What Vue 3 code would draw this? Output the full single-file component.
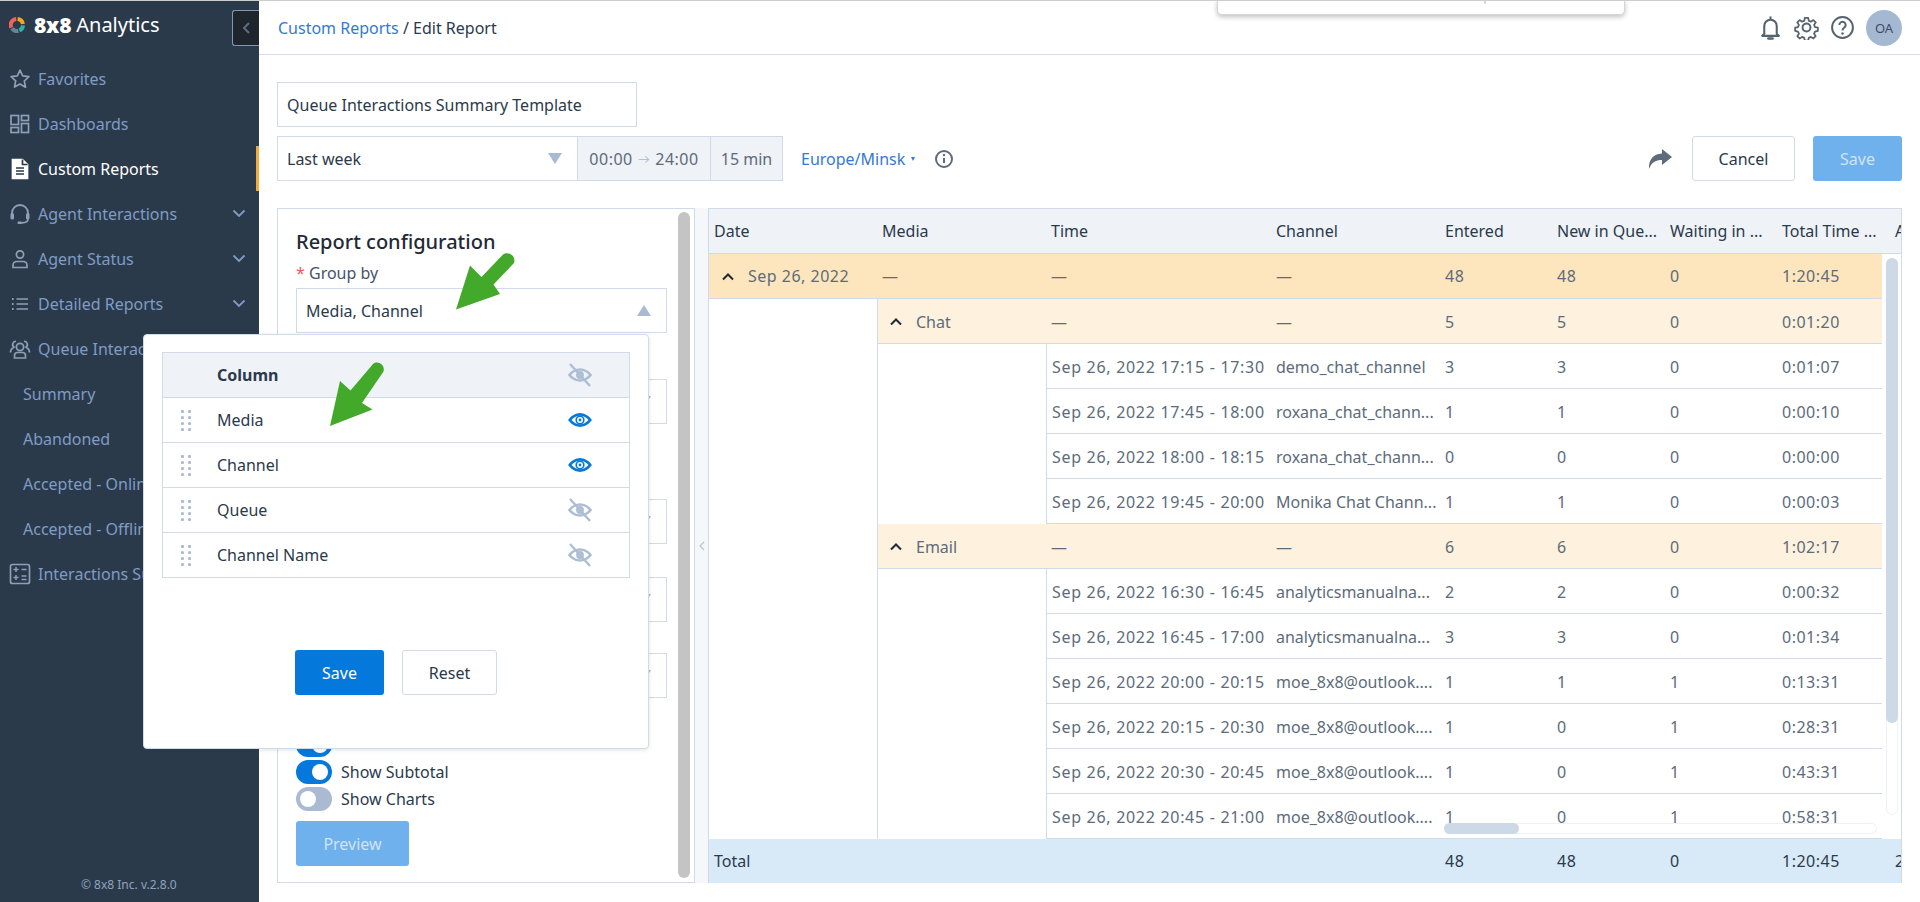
<script setup>
const nav = [
  { label: 'Favorites', icon: 'star' },
  { label: 'Dashboards', icon: 'dash' },
  { label: 'Custom Reports', icon: 'doc', active: true },
  { label: 'Agent Interactions', icon: 'head', chev: true },
  { label: 'Agent Status', icon: 'user', chev: true },
  { label: 'Detailed Reports', icon: 'list', chev: true },
  { label: 'Queue Interactions', icon: 'group', chev: true },
  { label: 'Summary', sub: true },
  { label: 'Abandoned', sub: true },
  { label: 'Accepted - Online', sub: true },
  { label: 'Accepted - Offline', sub: true },
  { label: 'Interactions Summary', icon: 'calc' },
]
const cols = ['Date', 'Media', 'Time', 'Channel', 'Entered', 'New in Que...', 'Waiting in ...', 'Total Time ...', 'A']
const d = 'Sep 26, 2022 '
const rows = [
  { lvl: 0, date: 'Sep 26, 2022', media: '—', time: '—', ch: '—', v: ['48', '48', '0', '1:20:45'] },
  { lvl: 1, media: 'Chat', time: '—', ch: '—', v: ['5', '5', '0', '0:01:20'] },
  { lvl: 2, time: d + '17:15 - 17:30', ch: 'demo_chat_channel', v: ['3', '3', '0', '0:01:07'] },
  { lvl: 2, time: d + '17:45 - 18:00', ch: 'roxana_chat_chann...', v: ['1', '1', '0', '0:00:10'] },
  { lvl: 2, time: d + '18:00 - 18:15', ch: 'roxana_chat_chann...', v: ['0', '0', '0', '0:00:00'] },
  { lvl: 2, time: d + '19:45 - 20:00', ch: 'Monika Chat Chann...', v: ['1', '1', '0', '0:00:03'] },
  { lvl: 1, media: 'Email', time: '—', ch: '—', v: ['6', '6', '0', '1:02:17'] },
  { lvl: 2, time: d + '16:30 - 16:45', ch: 'analyticsmanualna...', v: ['2', '2', '0', '0:00:32'] },
  { lvl: 2, time: d + '16:45 - 17:00', ch: 'analyticsmanualna...', v: ['3', '3', '0', '0:01:34'] },
  { lvl: 2, time: d + '20:00 - 20:15', ch: 'moe_8x8@outlook....', v: ['1', '1', '1', '0:13:31'] },
  { lvl: 2, time: d + '20:15 - 20:30', ch: 'moe_8x8@outlook....', v: ['1', '0', '1', '0:28:31'] },
  { lvl: 2, time: d + '20:30 - 20:45', ch: 'moe_8x8@outlook....', v: ['1', '0', '1', '0:43:31'] },
  { lvl: 2, time: d + '20:45 - 21:00', ch: 'moe_8x8@outlook....', v: ['1', '0', '1', '0:58:31'] },
]
const popupRows = [
  { name: 'Media', on: true },
  { name: 'Channel', on: true },
  { name: 'Queue', on: false },
  { name: 'Channel Name', on: false },
]
const dots = [[1.5, 1.5], [8.5, 1.5], [1.5, 7.5], [8.5, 7.5], [1.5, 13.5], [8.5, 13.5], [1.5, 19.5], [8.5, 19.5]]
</script>

<template>
  <div class="page">
    <aside class="side">
      <div class="brand">
        <svg class="logo" viewBox="0 0 16 16" width="16" height="16" fill="none" stroke-width="4">
          <path d="M2.3 10.6A6 6 0 0 1 7.2 2.05" stroke="#f0625d" />
          <path d="M8.6 2.03A6 6 0 0 1 13.9 7" stroke="#f5a81c" />
          <path d="M14 8.4A6 6 0 0 1 10.4 13.5" stroke="#2fb3a3" />
          <path d="M9.4 13.85A6 6 0 0 1 3 11.4" stroke="#6b8494" />
        </svg>
        <b class="b8">8x8</b><span class="bname">Analytics</span>
      </div>
      <button class="collapse">
        <svg viewBox="0 0 10 14" width="10" height="14" fill="none" stroke="#5d6d80" stroke-width="2"><path d="M8 2 3 7l5 5" /></svg>
      </button>
      <nav class="nav">
        <div v-for="n in nav" :key="n.label" class="item" :class="{ active: n.active, sub: n.sub }">
          <svg v-if="n.icon" class="ico" viewBox="0 0 22 22" width="22" height="22" fill="none" stroke="currentColor" stroke-width="1.7">
            <path v-if="n.icon === 'star'" d="M11 2.2l2.7 5.7 6.2.8-4.6 4.3 1.2 6.2L11 16l-5.500 3 1.200-6.200L2.100 8.700l6.200-.8z" stroke-linejoin="round" />
            <g v-if="n.icon === 'dash'"><rect x="2" y="2.500" width="7.500" height="9" /><rect x="12.500" y="2.500" width="7" height="5" /><rect x="2" y="14.500" width="7.500" height="5" /><rect x="12.500" y="10.500" width="7" height="9" /></g>
            <g v-if="n.icon === 'doc'"><path d="M3.500 1.500h10l5 5v14h-15z" fill="#fff" stroke="#fff" /><path d="M13.500 1.500v5h5" stroke="#2b3a4b" /><path d="M7 10h8M7 13h8M7 16h8" stroke="#2b3a4b" /></g>
            <g v-if="n.icon === 'head'"><path d="M3 12V10a8 8 0 0 1 16 0v2" stroke-width="1.800" /><rect x="1.500" y="10" width="3.500" height="6.500" rx="1.500" fill="currentColor" stroke="none" /><rect x="17" y="10" width="3.500" height="6.500" rx="1.500" fill="currentColor" stroke="none" /><path d="M19 16c0 3-3 3.800-6 3.800" /><rect x="8.500" y="18.500" width="4.500" height="2.500" rx="1" fill="currentColor" stroke="none" /></g>
            <g v-if="n.icon === 'user'"><circle cx="11" cy="6.500" r="3.600" /><path d="M4 19.500v-2.500c0-2 1.800-3.500 4-3.500h6c2.200 0 4 1.500 4 3.500v2.500z" /></g>
            <g v-if="n.icon === 'list'"><path d="M7.500 6h11.500M7.500 11h11.500M7.500 16h11.500" /><path d="M3 6h1.600M3 11h1.600M3 16h1.600" stroke-width="1.800" /></g>
            <g v-if="n.icon === 'group'"><circle cx="11" cy="9" r="3.600" /><path d="M5.500 20v-2.500c0-2 1.500-3 3-3h5c1.500 0 3 1 3 3V20z" /><path d="M7 3.500a3 3 0 0 0-2 5.500c-1.800 1-3.500 3-3.500 5.500M15 3.500a3 3 0 0 1 2 5.500c1.800 1 3.500 3 3.500 5.500" /></g>
            <g v-if="n.icon === 'calc'"><rect x="1.500" y="1.500" width="19" height="19" rx="2" /><path d="M4.500 6.500h5M7 4v5M12.500 6.500h5M12.500 13h5M12.500 16.500h5M4.500 14.500h5M7 12v5" stroke-width="1.400" /></g>
          </svg>
          <span class="lbl">{{ n.label }}</span>
          <svg v-if="n.chev" class="chev" viewBox="0 0 14 9" width="14" height="9" fill="none" stroke="currentColor" stroke-width="1.800"><path d="M1.500 1.500 7 7l5.500-5.500" /></svg>
        </div>
      </nav>
      <div class="copy">© 8x8 Inc. v.2.8.0</div>
    </aside>

    <main class="main">
      <header class="head">
        <div class="crumb"><a>Custom Reports</a> / Edit Report</div>
        <div class="tools">
          <svg viewBox="0 0 24 24" width="25" height="25" fill="none" stroke="#55636f" stroke-width="2"><path d="M12 1.500v2.500M6 18V10.500a6 6 0 0 1 12 0V18l2 2H4z" stroke-linejoin="round" /><path d="M10 22.500h4" stroke-width="2.400" stroke-linecap="round" /></svg>
          <svg viewBox="0 0 24 24" width="25" height="25" fill="none" stroke="#55636f" stroke-width="1.900"><circle cx="12" cy="12" r="3.800" /><path stroke-linejoin="round" d="M10.200 1.800h3.600l.6 3 2.300 1 2.600-1.700 2.500 2.500-1.700 2.600 1 2.300 3 .6v3.600l-3 .6-1 2.300 1.700 2.600-2.500 2.500-2.600-1.700-2.300 1-.6 3h-3.600l-.6-3-2.300-1-2.600 1.700-2.500-2.500 1.700-2.600-1-2.300-3-.6v-3.600l3-.6 1-2.300-1.700-2.600 2.500-2.500 2.600 1.700 2.300-1z" transform="translate(1.200 1.200) scale(.9)" /></svg>
          <svg viewBox="0 0 24 24" width="25" height="25" fill="none" stroke="#55636f" stroke-width="1.900"><circle cx="12" cy="12" r="10" /><path d="M9 9.500a3 3 0 1 1 4.700 2.500c-1.100.8-1.700 1.400-1.700 2.800" /><circle cx="12" cy="17.800" r="1.200" fill="#55636f" stroke="none" /></svg>
          <span class="avatar">OA</span>
        </div>
      </header>

      <section class="content">
        <div class="title-input">Queue Interactions Summary Template</div>
        <div class="filters">
          <div class="range">
            <span>Last week</span>
            <i class="tri down"></i>
          </div>
          <div class="addon time">00:00 <em>→</em> 24:00</div>
          <div class="addon min">15 min</div>
          <a class="tz">Europe/Minsk <i class="mini"></i></a>
          <svg class="info" viewBox="0 0 20 20" width="20" height="20" fill="none" stroke="#5d6b7a" stroke-width="2"><circle cx="10" cy="10" r="8" /><path d="M10 9v5" /><circle cx="10" cy="6" r="1.200" fill="#5d6b7a" stroke="none" /></svg>
          <div class="spacer"></div>
          <svg class="share" viewBox="0 0 24 20" width="24" height="20"><path fill="#5d6b7a" d="M14 0l10 8-10 8v-5C7.500 11 3.500 13.500 1 20 .5 11 5 5 14 4.500z" /></svg>
          <button class="btn ghost cancel">Cancel</button>
          <button class="btn pale top-save">Save</button>
        </div>

        <div class="work">
          <div class="config">
            <h2>Report configuration</h2>
            <label class="lab"><span class="req">*</span> Group by</label>
            <div class="sel"><span>Media, Channel</span><i class="tri up"></i></div>
            <div class="hiddenlab"></div>
            <div class="sel"><i class="tri down"></i></div>
            <div class="hiddenlab big"></div>
            <div class="sel"><i class="tri down"></i></div>
            <div class="sel mt"><i class="tri down"></i></div>
            <div class="sel mtb"><i class="tri down"></i></div>
            <div class="tog-row first"><i class="tog on"></i><span>Show Total</span></div>
            <div class="tog-row"><i class="tog on"></i><span>Show Subtotal</span></div>
            <div class="tog-row"><i class="tog"></i><span>Show Charts</span></div>
            <button class="btn pale preview">Preview</button>
            <div class="panelbar"></div>
          </div>
          <div class="split"><svg viewBox="0 0 6 10" width="6" height="10" fill="none" stroke="#b9c6d8" stroke-width="1.200"><path d="M5 1 1 5l4 4" /></svg></div>
          <div class="grid">
            <div class="r hdr">
              <div v-for="c in cols" :key="c" class="c">{{ c }}</div>
            </div>
            <div class="body">
              <div class="rows">
                <div v-for="(r, i) in rows" :key="i" class="r" :class="'l' + r.lvl">
                  <div class="c cd">
                    <template v-if="r.lvl === 0"><svg class="upc" viewBox="0 0 14 9" width="14" height="9" fill="none" stroke="#1f2a36" stroke-width="2"><path d="M2 7.500 7 2.500l5 5" /></svg>{{ r.date }}</template>
                  </div>
                  <div class="c cm">
                    <svg v-if="r.lvl === 1" class="upc" viewBox="0 0 14 9" width="14" height="9" fill="none" stroke="#1f2a36" stroke-width="2"><path d="M2 7.500 7 2.500l5 5" /></svg>{{ r.media }}
                  </div>
                  <div class="c ct">{{ r.time }}</div>
                  <div class="c">{{ r.ch }}</div>
                  <div v-for="(v, j) in r.v" :key="j" class="c num">{{ v }}</div>
                </div>
              </div>
              <div class="vtrack"><div class="vthumb"></div></div>
              <div class="htrack"><div class="hthumb"></div></div>
            </div>
            <div class="r foot">
              <div class="c wide">Total</div>
              <div class="c num">48</div><div class="c num">48</div><div class="c num">0</div><div class="c num">1:20:45</div><div class="c">2</div>
            </div>
          </div>
        </div>
      </section>
    </main>

    <div class="popup">
      <div class="ptable">
        <div class="prow phead">
          <span class="grip-slot"></span>
          <span class="pname">Column</span>
          <svg class="eye" viewBox="0 0 24 24" width="24" height="24" fill="none" stroke="#adbdd3" stroke-width="2.600"><path d="M1.500 12S5.500 6.500 12 6.500 22.500 12 22.500 12 18.500 17.500 12 17.500 1.500 12 1.500 12z" /><circle cx="12" cy="12" r="2.600" /><path d="M2 1l20 22" stroke-width="2.400" /></svg>
        </div>
        <div v-for="p in popupRows" :key="p.name" class="prow">
          <svg class="grip-slot grip" viewBox="0 0 10 21" width="10" height="21"><circle v-for="(q, k) in dots" :key="k" :cx="q[0]" :cy="q[1]" r="1.600" fill="#a9bad2" /></svg>
          <span class="pname">{{ p.name }}</span>
          <svg v-if="p.on" class="eye" viewBox="0 0 24 24" width="24" height="24" fill="none" stroke="#0578dc"><path stroke-width="2.800" d="M1.800 12S6 6.400 12 6.400 22.200 12 22.200 12 18 17.600 12 17.600 1.800 12 1.800 12z" /><circle cx="12" cy="12" r="3.800" stroke-width="1.600" /><circle cx="12" cy="12" r="1.400" fill="#0578dc" stroke="none" /></svg>
          <svg v-else class="eye" viewBox="0 0 24 24" width="24" height="24" fill="none" stroke="#adbdd3" stroke-width="2.600"><path d="M1.500 12S5.500 6.500 12 6.500 22.500 12 22.500 12 18.500 17.500 12 17.500 1.500 12 1.500 12z" /><circle cx="12" cy="12" r="2.600" /><path d="M2 1l20 22" stroke-width="2.400" /></svg>
        </div>
      </div>
      <div class="pbtns">
        <button class="btn solid">Save</button>
        <button class="btn ghost reset">Reset</button>
      </div>
    </div>

    <div class="toast"><i></i></div>

    <svg class="arrow a1" viewBox="0 0 70 72" width="70" height="72"><path fill="#43a92b" d="M0 60.500 14 16.500 25.500 28 47 5.500c5-4 13.500 1.500 11 8.500L37.500 35.500 44 45z" /></svg>
    <svg class="arrow a2" viewBox="0 0 70 72" width="70" height="72"><path fill="#43a92b" d="M0 64 10 19 20.500 28.500 43 2c5-4 12.500 1 10.500 7.500L32 41l10.500 6.500z" /></svg>
  </div>
</template>

<style>
html, body { margin: 0; padding: 0; background: #fff; }
</style>

<style scoped>
.page { position: relative; display: flex; width: 1920px; height: 902px; overflow: hidden; border-top: 1px solid #cdcdcd; box-sizing: border-box; font-family: "Noto Sans", Lato, sans-serif; font-size: 16px; color: #2b3a4b; background: #fff; }
.side { position: relative; width: 259px; flex: none; background: #2b3a4b; display: flex; flex-direction: column; color: #7f9cc4; }
.brand { height: 47px; padding: 0 0 0 9px; display: flex; align-items: center; color: #fff; }
.logo { margin-right: 9px; }
.b8 { font-family: "Open Sans", sans-serif; font-weight: 800; font-size: 21px; margin-right: 5px; letter-spacing: -.2px; }
.bname { font-size: 20px; }
.collapse { position: absolute; top: 9px; right: 0; width: 27px; height: 36px; box-sizing: border-box; border: 1px solid #8497b0; border-right: 0; border-radius: 3px 0 0 3px; background: #1e252d; display: flex; align-items: center; justify-content: center; padding: 0; }
.nav { padding-top: 8px; display: flex; flex-direction: column; }
.item { position: relative; height: 45px; display: flex; align-items: center; padding-left: 9px; box-sizing: border-box; white-space: nowrap; }
.item.sub { padding-left: 23px; }
.ico { flex: none; margin-right: 7px; color: #8ea0b8; }
.item.active { color: #fff; }
.item.active .ico { color: #fff; }
.item.active::after { content: ""; position: absolute; right: 0; top: 0; width: 3px; height: 45px; background: #f0ab3c; }
.chev { position: absolute; right: 13px; top: 18px; }
.copy { position: absolute; left: 81px; top: 875px; font-size: 12px; color: #8ea2bd; white-space: nowrap; }

.main { flex: 1; min-width: 0; display: flex; flex-direction: column; }
.head { height: 53px; flex: none; box-sizing: content-box; border-bottom: 1px solid #d3ddec; display: flex; align-items: center; justify-content: space-between; padding: 0 18px 0 19px; }
.crumb a { color: #3479d4; }
.tools { display: flex; align-items: center; gap: 11px; }
.avatar { width: 36px; height: 36px; border-radius: 50%; background: #a5b8d2; display: flex; align-items: center; justify-content: center; font-size: 13px; color: #3d4c5e; margin-left: 0; }

.content { padding: 27px 18px 0; display: flex; flex-direction: column; }
.title-input { width: 360px; height: 45px; box-sizing: border-box; border: 1px solid #d0dbe9; padding: 0 9px; display: flex; align-items: center; color: #2b3a4b; }
.filters { margin-top: 9px; height: 45px; display: flex; align-items: center; }
.range { width: 301px; height: 45px; box-sizing: border-box; border: 1px solid #d0dbe9; display: flex; align-items: center; justify-content: space-between; padding: 0 15px 0 9px; }
.tri { display: block; width: 0; height: 0; border-left: 7px solid transparent; border-right: 7px solid transparent; }
.tri.down { border-top: 11px solid #a9bad2; }
.tri.up { border-bottom: 11px solid #a9bad2; }
.addon { height: 45px; box-sizing: border-box; border: 1px solid #d0dbe9; border-left: 0; background: #eff2f7; display: flex; align-items: center; color: #5d6b7a; white-space: nowrap; }
.time { width: 133px; justify-content: center; letter-spacing: .5px; }
.time em { font-style: normal; color: #a9bad2; margin: 0 5px; font-size: 12px; }
.min { width: 72px; justify-content: center; }
.tz { margin-left: 18px; color: #3479d4; display: flex; align-items: center; }
.mini { display: inline-block; width: 0; height: 0; border-left: 2.5px solid transparent; border-right: 2.5px solid transparent; border-top: 4px solid #3479d4; margin-left: 6px; }
.info { margin-left: 19px; }
.spacer { flex: 1; }
.share { margin-right: 20px; }
.btn { height: 45px; box-sizing: border-box; border-radius: 3px; font-family: inherit; font-size: 16px; padding: 0; }
.ghost { background: #fff; border: 1px solid #d0dbe9; color: #2b3a4b; }
.pale { background: #6fb1ec; border: 0; color: #cfe4f8; }
.solid { background: #0578dc; border: 0; color: #fff; width: 89px; }
.cancel { width: 103px; margin-right: 18px; }
.top-save { width: 89px; }

.work { margin-top: 27px; display: flex; height: 675px; }
.config { position: relative; width: 418px; flex: none; box-sizing: border-box; border: 1px solid #d0dbe9; padding: 19px 26px 0 18px; display: flex; flex-direction: column; }
.config h2 { margin: 0; font-size: 20px; font-weight: 500; line-height: 28px; color: #1f2a36; }
.lab { margin-top: 5px; height: 24px; line-height: 24px; color: #46546a; }
.req { color: #ef5a5a; }
.sel { width: 371px; height: 45px; flex: none; box-sizing: border-box; border: 1px solid #d0dbe9; display: flex; align-items: center; justify-content: space-between; padding: 0 15px 0 9px; margin-top: 3px; }
.sel .tri.down { margin-left: auto; }
.hiddenlab { height: 43px; }
.hiddenlab.big { height: 72px; }
.sel.mt { margin-top: 33px; }
.sel.mtb { margin-top: 31px; }
.tog-row { display: flex; align-items: center; gap: 9px; height: 23px; margin-top: 4px; }
.tog-row.first { margin-top: 35px; }
.tog-row.first span { align-self: flex-start; line-height: 15px; }
.tog { position: relative; display: block; width: 36px; height: 24px; border-radius: 12px; background: #a9bad2; }
.tog::after { content: ""; position: absolute; width: 16px; height: 16px; top: 4px; left: 4px; border-radius: 50%; background: #fff; }
.tog.on { background: #0578dc; }
.tog.on::after { left: 16px; }
.preview { width: 113px; margin-top: 11px; }
.panelbar { position: absolute; right: 4px; top: 3px; width: 12px; height: 666px; border-radius: 6px; background: #c4c4c4; }
.split { width: 14px; flex: none; box-sizing: border-box; background: #f5f7fb; border-right: 1px solid #d0dbe9; display: flex; align-items: center; justify-content: center; }

.grid { flex: 1; min-width: 0; display: flex; flex-direction: column; overflow: hidden; border-top: 1px solid #d0dbe9; border-right: 1px solid #d0dbe9; box-sizing: border-box; }
.r { display: grid; grid-template-columns: 168px 169px 225px 169px 112px 113px 112px 113px 112px; height: 45px; flex: none; box-sizing: border-box; border-bottom: 1px solid #d0dbe9; white-space: nowrap; }
.c { padding-left: 5px; display: flex; align-items: center; overflow: hidden; color: #5d6b7a; box-sizing: border-box; }
.hdr { background: #eff2f7; height: 45px; }
.hdr .c { color: #2b3a4b; }
.body { position: relative; height: 585px; flex: none; overflow: hidden; }
.rows { width: 1173px; overflow: hidden; }
.rows .r { width: 1173px; }
.l0 { background: #fde6bd; }
.l1 { background: #fef2de; border-bottom: 0; box-shadow: inset 0 -1px 0 #d0dbe9; clip-path: inset(0 0 0 168px); }
.l1 .cm { border-left: 1px solid #d0dbe9; }
.l2 .cm { border-left: 1px solid #d0dbe9; }
.l2 .ct { border-left: 1px solid #d0dbe9; }
.l2 { background: linear-gradient(#d0dbe9, #d0dbe9) no-repeat 337px bottom / 836px 1px #fff; border-bottom: 0; }
.l0 .c, .l1 .c { color: #5d6b7a; }
.upc { margin: 0 13px 0 5px; flex: none; }
.l0 .cd { padding-left: 7px; letter-spacing: .5px; }
.l1 .cm { padding-left: 6px; }
.ct { letter-spacing: .7px; }
.num { letter-spacing: .5px; }
.vtrack { position: absolute; left: 1177px; top: 4px; width: 12px; height: 557px; box-sizing: border-box; border: 1px solid #eef1f6; border-radius: 6px; background: #fff; }
.vthumb { height: 465px; margin: -1px; border-radius: 6px; background: #ced9e7; }
.htrack { position: absolute; left: 735px; top: 569px; width: 433px; height: 11px; box-sizing: border-box; border: 1px solid #eef1f6; border-radius: 6px; background: #fff; }
.hthumb { width: 75px; height: 11px; margin: -1px; border-radius: 6px; background: #ced9e7; }
.foot { background: #d8e9f8; grid-template-columns: 731px 112px 113px 112px 113px 12px; border-top: 0; }
.foot .c { color: #2b3a4b; }

.popup { position: absolute; left: 143px; top: 333px; width: 506px; height: 415px; box-sizing: border-box; background: #fff; border: 1px solid #d0dbe9; border-radius: 4px; box-shadow: 0 1px 4px rgba(43, 58, 75, .15); padding: 17px 18px 0; }
.ptable { border: 1px solid #d0dbe9; border-bottom: 0; }
.prow { display: flex; align-items: center; height: 45px; box-sizing: border-box; border-bottom: 1px solid #d0dbe9; color: #2b3a4b; position: relative; }
.phead { background: #eff2f7; }
.phead .pname { font-weight: 700; }
.grip-slot { width: 54px; flex: none; }
.grip { width: 10px; margin: 0 26px 0 18px; }
.pname { flex: 1; }
.eye { margin-right: 37px; flex: none; }
.pbtns { display: flex; gap: 18px; margin-top: 72px; padding-left: 133px; }
.reset { width: 95px; }

.toast { position: absolute; left: 1217px; top: -1px; width: 408px; height: 15px; box-sizing: border-box; background: #fff; border: 1px solid #d6d6d6; border-top: 0; border-radius: 0 0 5px 5px; box-shadow: 0 2px 5px rgba(0, 0, 0, .25); }
.toast i { position: absolute; left: 266px; top: 0; width: 2px; height: 4px; background: #d6dbe2; }

.arrow { position: absolute; }
.a1 { left: 456px; top: 248px; }
.a2 { left: 330px; top: 361px; }
</style>
